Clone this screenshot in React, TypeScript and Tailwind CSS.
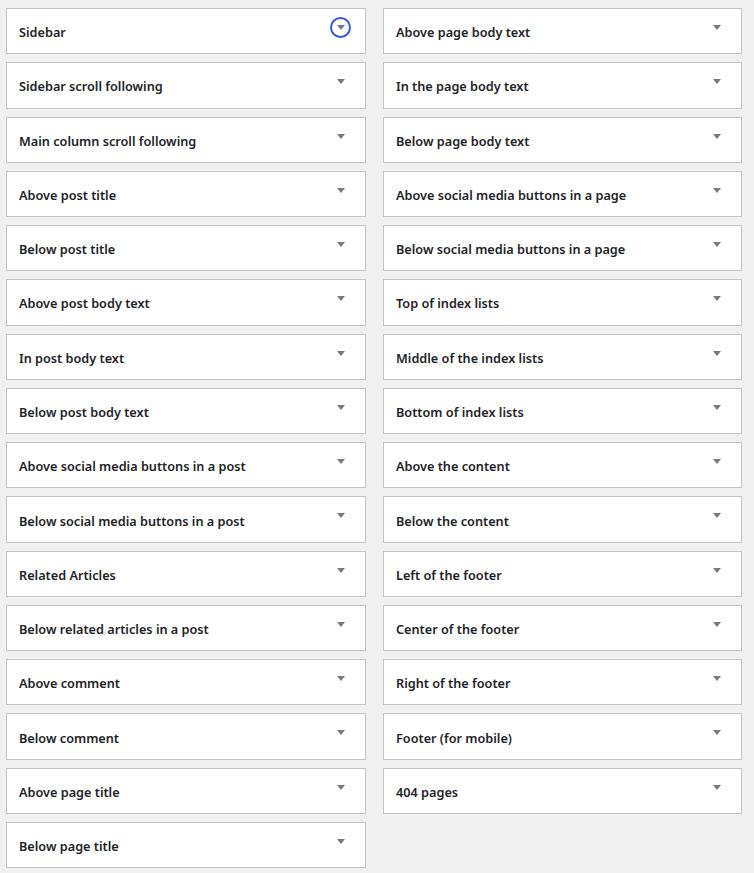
import React from 'react';

const LEFT = [
    'Sidebar',
    'Sidebar scroll following',
    'Main column scroll following',
    'Above post title',
    'Below post title',
    'Above post body text',
    'In post body text',
    'Below post body text',
    'Above social media buttons in a post',
    'Below social media buttons in a post',
    'Related Articles',
    'Below related articles in a post',
    'Above comment',
    'Below comment',
    'Above page title',
    'Below page title',
];

const RIGHT = [
    'Above page body text',
    'In the page body text',
    'Below page body text',
    'Above social media buttons in a page',
    'Below social media buttons in a page',
    'Top of index lists',
    'Middle of the index lists',
    'Bottom of index lists',
    'Above the content',
    'Below the content',
    'Left of the footer',
    'Center of the footer',
    'Right of the footer',
    'Footer (for mobile)',
    '404 pages',
];

const Arrow = () => (
    <svg width="8" height="5" viewBox="0 0 8 5" className="block">
        <path d="M0 0 L8 0 L4 5 Z" fill="#787c82" />
    </svg>
);

const AreaBox = ({ title, focused }: { title: string; focused?: boolean }) => (
    <div className="relative flex h-[46.27px] items-center border border-[#c3c4c7] bg-white pl-3 pt-[3px]">
        <span className="text-[12.7px] font-semibold text-[#1d2327]">{title}</span>
        <div className="absolute right-[14px] top-[8px] flex h-[21px] w-[21px] items-center justify-center">
            {focused && <span className="absolute inset-0 rounded-full border-2 border-[#3858e9]" />}
            <Arrow />
        </div>
    </div>
);

export default function App() {
    return (
        <div
            className="min-h-[873px] bg-[#f0f0f1] pl-[6px] pr-[12px] pt-[8px]"
            style={{ fontFamily: '"Noto Sans", "Open Sans", sans-serif' }}
        >
            <div className="flex items-start gap-[17px]">
                <div className="flex w-[360px] flex-col gap-2">
                    {LEFT.map((t, i) => (
                        <AreaBox key={t} title={t} focused={i === 0} />
                    ))}
                </div>
                <div className="flex w-[359px] flex-col gap-2">
                    {RIGHT.map(t => (
                        <AreaBox key={t} title={t} />
                    ))}
                </div>
            </div>
        </div>
    );
}
